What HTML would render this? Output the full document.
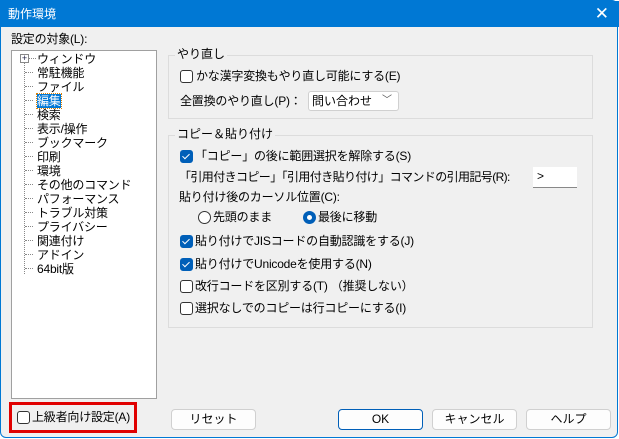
<!DOCTYPE html>
<html><head><meta charset="utf-8"><style>
*{margin:0;padding:0;box-sizing:border-box}
body{width:619px;height:439px;background:#fff;font-family:"Liberation Sans","Noto Sans CJK JP",sans-serif;font-size:12px;color:#000;position:relative;overflow:hidden}
.win{position:absolute;left:0;top:0;width:618px;height:438px;background:#f0f0f0;border:1px solid #0078d4;border-radius:0 6px 6px 6px}
.title{position:absolute;left:0;top:0;width:618px;height:26px;background:#0078d4;color:#fff;font-size:12px;line-height:26px;padding-left:7px}
.x{position:absolute;right:10px;top:0;color:#fff;font-size:17px;line-height:26px}
.a{position:absolute;white-space:nowrap;line-height:14px;letter-spacing:-0.2px}
.tree{position:absolute;left:11px;top:50px;width:146px;height:349px;background:#fff;border:1px solid #a0a0a0}
.grp{position:absolute;border:1px solid #dcdcdc}
.lbl{position:absolute;background:#f0f0f0;padding:0 2px;line-height:14px}
.cb{position:absolute;width:13px;height:13px;border:1px solid #333;border-radius:3px;background:#fff}
.cb.on{background:#005fb8;border-color:#005fb8}
.cb.on::after{content:"";position:absolute;left:3px;top:1px;width:3px;height:6px;border:solid #fff;border-width:0 1.5px 1.5px 0;transform:rotate(45deg)}
.rb{position:absolute;width:13px;height:13px;border:1px solid #333;border-radius:50%;background:#fff}
.rb.on{background:#005fb8;border-color:#005fb8}
.rb.on::after{content:"";position:absolute;left:3px;top:3px;width:5px;height:5px;border-radius:50%;background:#fff}
.btn{position:absolute;height:21px;background:#fdfdfd;border:1px solid #d0d0d0;border-radius:4px;text-align:center;line-height:19px}
.dot{position:absolute;border-top:1px dotted #888;width:8px}
</style></head><body>
<div class="win">
<div class="title">動作環境<span class="x">✕</span></div>
</div>
<div class="a" style="left:11px;top:32px">設定の対象(L):</div>
<div class="tree">
<div style="position:absolute;left:12px;top:12px;height:211px;border-left:1px dotted #888"></div>
<div style="position:absolute;left:8px;top:3px;width:9px;height:9px;border:1px solid #888;background:#fff;font-size:9px;line-height:7px;text-align:center;color:#224">+</div>
</div>
<div class="a" style="left:37px;top:52px;line-height:14px">ウィンドウ<br>常駐機能<br>ファイル<br><span style="background:#0078d7;color:#fff;outline:1px dotted #e08000">編集</span><br>検索<br>表示/操作<br>ブックマーク<br>印刷<br>環境<br>その他のコマンド<br>パフォーマンス<br>トラブル対策<br>プライバシー<br>関連付け<br>アドイン<br>64bit版</div>
<div class="dot" style="left:28px;top:58px"></div><div class="dot" style="left:25px;top:72px"></div><div class="dot" style="left:25px;top:86px"></div><div class="dot" style="left:25px;top:100px"></div><div class="dot" style="left:25px;top:114px"></div><div class="dot" style="left:25px;top:128px"></div><div class="dot" style="left:25px;top:142px"></div><div class="dot" style="left:25px;top:156px"></div><div class="dot" style="left:25px;top:170px"></div><div class="dot" style="left:25px;top:184px"></div><div class="dot" style="left:25px;top:198px"></div><div class="dot" style="left:25px;top:212px"></div><div class="dot" style="left:25px;top:226px"></div><div class="dot" style="left:25px;top:240px"></div><div class="dot" style="left:25px;top:254px"></div><div class="dot" style="left:25px;top:268px"></div>

<div class="grp" style="left:168px;top:55px;width:425px;height:64px"></div>
<div class="lbl" style="left:175px;top:47px">やり直し</div>
<div class="cb" style="left:180px;top:70px"></div>
<div class="a" style="left:196px;top:69px">かな漢字変換もやり直し可能にする(E)</div>
<div class="a" style="left:180px;top:94px">全置換のやり直し(P)：</div>
<div style="position:absolute;left:308px;top:91px;width:91px;height:20px;background:#fff;border:1px solid #d0d0d0;border-radius:3px;padding-left:3px;line-height:18px">問い合わせ<span style="position:absolute;right:6px;top:0;color:#555;font-size:10px">﹀</span></div>

<div class="grp" style="left:168px;top:135px;width:425px;height:193px"></div>
<div class="lbl" style="left:175px;top:127px">コピー＆貼り付け</div>
<div class="cb on" style="left:180px;top:150px"></div>
<div class="a" style="left:195px;top:149px">「コピー」の後に範囲選択を解除する(S)</div>
<div class="a" style="left:179px;top:170px;letter-spacing:-0.6px">「引用付きコピー」「引用付き貼り付け」コマンドの引用記号(R):</div>
<div style="position:absolute;left:533px;top:167px;width:44px;height:21px;background:#fff;border-bottom:1px solid #888;padding-left:4px;line-height:19px">&gt;</div>
<div class="a" style="left:179px;top:190px">貼り付け後のカーソル位置(C):</div>
<div class="rb" style="left:198px;top:211px"></div>
<div class="a" style="left:213px;top:210px">先頭のまま</div>
<div class="rb on" style="left:303px;top:211px"></div>
<div class="a" style="left:318px;top:210px">最後に移動</div>
<div class="cb on" style="left:180px;top:235px"></div>
<div class="a" style="left:195px;top:234px">貼り付けでJISコードの自動認識をする(J)</div>
<div class="cb on" style="left:180px;top:258px"></div>
<div class="a" style="left:195px;top:257px">貼り付けでUnicodeを使用する(N)</div>
<div class="cb" style="left:180px;top:280px"></div>
<div class="a" style="left:195px;top:279px">改行コードを区別する(T) （推奨しない）</div>
<div class="cb" style="left:180px;top:302px"></div>
<div class="a" style="left:195px;top:301px">選択なしでのコピーは行コピーにする(I)</div>

<div style="position:absolute;left:9px;top:402px;width:128px;height:31px;border:3px solid #e00000"></div>
<div class="cb" style="left:17px;top:411px"></div>
<div class="a" style="left:32px;top:410px">上級者向け設定(A)</div>
<div class="btn" style="left:171px;top:409px;width:85px">リセット</div>
<div class="btn" style="left:338px;top:409px;width:85px;border-color:#005fb8">OK</div>
<div class="btn" style="left:432px;top:409px;width:85px">キャンセル</div>
<div class="btn" style="left:526px;top:409px;width:85px">ヘルプ</div>
</body></html>
